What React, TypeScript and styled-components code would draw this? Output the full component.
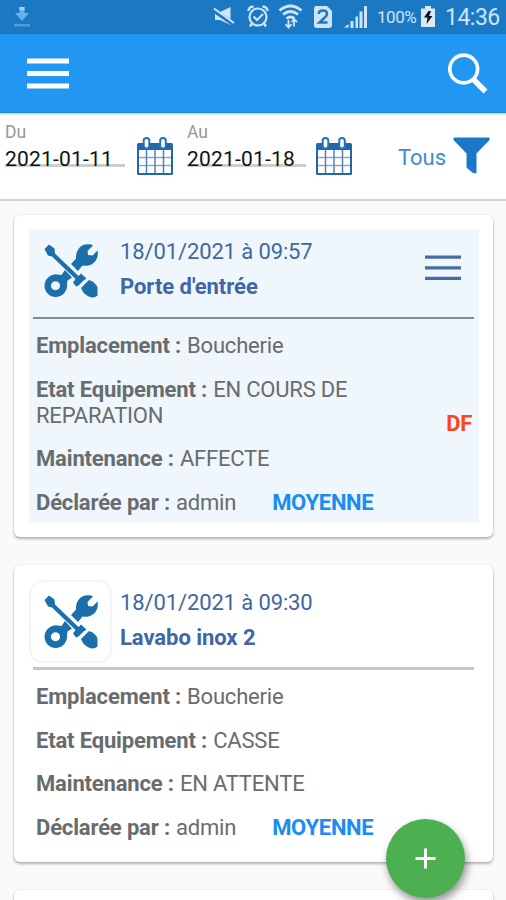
import React from "react";
import styled, { createGlobalStyle } from "styled-components";

const GlobalStyle = createGlobalStyle`
  * { box-sizing: border-box; }
  body {
    margin: 0;
    background: #fafafa;
    font-family: Roboto, "Liberation Sans", sans-serif;
  }
  svg { display: block; flex: none; }
`;

const Screen = styled.div`
  position: relative;
  width: 506px;
  height: 900px;
  overflow: hidden;
  background: #fafafa;
`;

const StatusBar = styled.div`
  display: flex;
  align-items: center;
  height: 34px;
  padding: 0 6px 0 13px;
  background: #1b79c4;
  color: #cfe4f8;
`;

const StatusIcons = styled.div`
  display: flex;
  align-items: center;
  margin-left: auto;
`;

const BatteryLevel = styled.span`
  width: 53px;
  padding-left: 9px;
  font-size: 17px;
  line-height: 34px;
  letter-spacing: -0.45px;
  white-space: nowrap;
`;

const Clock = styled.span`
  width: 55px;
  margin-left: 10px;
  font-size: 23px;
  line-height: 35px;
  letter-spacing: -0.5px;
  white-space: nowrap;
`;

const AppBar = styled.header`
  display: flex;
  align-items: center;
  justify-content: space-between;
  height: 79px;
  padding: 0 18px 0 27px;
  background: #2196f3;
  border-bottom: 1px solid #1c8ae0;
`;

const IconButton = styled.button`
  display: block;
  padding: 0;
  border: 0;
  background: none;
  color: inherit;
`;

const FilterBar = styled.section`
  display: flex;
  align-items: flex-start;
  height: 88px;
  padding: 9px 16px 0 5px;
  background: linear-gradient(#d4d4d4, #fff 3px);
  border-bottom: 2px solid #d2d2d2;
`;

const DateField = styled.label<{ $width: number }>`
  display: flex;
  flex-direction: column;
  width: ${(p) => p.$width}px;
`;

const FieldLabel = styled.span`
  height: 21px;
  font-size: 17.5px;
  line-height: 20px;
  color: #979797;
`;

const DateValue = styled.span`
  height: 24px;
  border-bottom: 3px solid #cdcdcd;
  font-size: 21px;
  line-height: 32px;
  letter-spacing: 0.2px;
  color: #111;
  white-space: nowrap;
`;

const CalendarSlot = styled.div<{ $left: number; $right: number }>`
  padding-top: 15px;
  margin: 0 ${(p) => p.$right}px 0 ${(p) => p.$left}px;
`;

const StatusFilter = styled.div`
  display: flex;
  align-items: center;
  margin: 14px 0 0 auto;
  height: 39px;
  gap: 7px;
  font-size: 22px;
  color: #3b8ed0;
`;

const FilterText = styled.span`
  line-height: 42px;
  padding-top: 4px;
`;

const CardList = styled.main`
  display: flex;
  flex-direction: column;
  gap: 28px;
  padding: 14px 13px 0 14px;
`;

const Card = styled.article<{ $height: number }>`
  flex: none;
  height: ${(p) => p.$height}px;
  padding: 14px;
  background: #fff;
  border-radius: 6px;
  box-shadow: 0 2px 3px rgba(0, 0, 0, 0.28), 0 0 2px rgba(0, 0, 0, 0.12);
`;

const CardContent = styled.div<{ $highlighted?: boolean }>`
  position: relative;
  width: 450px;
  height: 100%;
  margin-left: 1px;
  padding-top: ${(p) => (p.$highlighted ? 0 : 1)}px;
  background: ${(p) => (p.$highlighted ? "#eff7fd" : "#fff")};
`;

const CardHeader = styled.div<{ $highlighted?: boolean }>`
  display: flex;
  height: 90px;
  margin: 0 5px 0 4px;
  border-bottom: ${(p) => (p.$highlighted ? "2px solid #858b8f" : "3px solid #c6c6c6")};
`;

const Tile = styled.div<{ $framed?: boolean }>`
  display: flex;
  align-items: center;
  justify-content: center;
  flex: none;
  width: 83px;
  height: 83px;
  margin: 0 0 0 -4px;
  border: 2px solid ${(p) => (p.$framed ? "#f5f5f5" : "transparent")};
  border-radius: 14px;
`;

const Titles = styled.div`
  display: flex;
  flex-direction: column;
  gap: 9px;
  padding: 10px 0 0 8px;
  color: #4166a6;
  font-size: 22px;
  line-height: 26px;
  white-space: nowrap;
`;

const DateLine = styled.span`
  letter-spacing: -0.12px;
`;

const Name = styled.strong`
  font-weight: 700;
  letter-spacing: -0.05px;
`;

const CardMenu = styled(IconButton)`
  margin: 26px 13px 0 auto;
  height: 26px;
`;

const Details = styled.dl`
  display: flex;
  flex-direction: column;
  gap: 17.6px;
  margin: 0;
  padding: 14px 0 0 7px;
  color: #686c6e;
  font-size: 22px;
  line-height: 26px;
`;

const Detail = styled.div`
  width: 340px;
  white-space: nowrap;
`;

const Term = styled.dt`
  display: inline;
  margin-right: 6px;
  font-weight: 700;
  letter-spacing: -0.16px;
`;

const Value = styled.dd`
  display: inline;
  margin: 0;
  letter-spacing: -0.2px;
  white-space: normal;
`;

const Priority = styled.strong`
  margin-left: 36px;
  font-weight: 700;
  letter-spacing: -0.3px;
  color: #1b8cf0;
`;

const Flag = styled.strong`
  position: absolute;
  top: 182px;
  right: 7px;
  font-size: 22px;
  line-height: 26px;
  font-weight: 700;
  letter-spacing: -0.3px;
  color: #f8481f;
`;

const AddButton = styled.button`
  position: absolute;
  right: 41px;
  bottom: 2px;
  display: flex;
  align-items: center;
  justify-content: center;
  width: 79px;
  height: 79px;
  padding: 0;
  border: 0;
  border-radius: 50%;
  background: #4caf50;
  box-shadow: 2px 5px 9px rgba(0, 0, 0, 0.42);
`;

const DownloadIcon = () => (
  <svg width="18" height="20" viewBox="0 0 18 20">
    <path d="M6.5 0h5v6H16L9 14 2 6h4.500z" fill="#6aaee6" />
    <path d="M6.500 0h5v3h-5z" fill="#a9d0f2" />
    <path d="M1 17h16v2.500H1z" fill="#4d9bdc" />
  </svg>
);

const StatusGlyphs = () => (
  <svg width="155" height="34" viewBox="213 0 155 34" fill="none" stroke="#cfe4f8">
    <path d="M215 12h5l10.500-5v18l-10.500-5h-5z" fill="#cfe4f8" stroke="none" />
    <path d="M213.500 10l20 14" stroke="#1b79c4" strokeWidth="4.500" />
    <path d="M214 8.500l20 14.500" stroke="#cfe4f8" strokeWidth="2" />

    <circle cx="258" cy="17" r="8.500" strokeWidth="2.200" />
    <path d="M253.500 16.500l3.500 3.500 6-6" strokeWidth="2" />
    <path d="M248.500 11q0-4 5-4.500M267.500 11q0-4-5-4.500M252 23.500l-2 3M264 23.500l2 3" strokeWidth="2.400" />

    <path d="M279.500 10.500q11-9 22 0M283 14.500q7.500-6 15 0M286.500 18.500q4-3 8 0" strokeWidth="2.800" />
    <path d="M288.500 27v-7m-3 4l3 3.500 3-3.500M294 19.500v7m-2.500-4.500l2.500-3 3 3" strokeWidth="1.800" />

    <path d="M316 6h11l5 5v14q0 3-3 3h-12q-3 0-3-3V9q0-3 2-3z" fill="#cfe4f8" stroke="none" />
    <path d="M318.800 14q0-3.500 4.200-3.500 4 0 4 3.300 0 2-2.500 4l-5 4.700h8" stroke="#1b79c4" strokeWidth="2.500" />

    <path d="M344 27.500h4.500V24zM350.500 28v-7h3v7zM355.500 28v-11.500h2.500V28zM359.500 28V11.500h3V28zM364 28V6h3v22z" fill="#cfe4f8" stroke="none" />
  </svg>
);

const BatteryIcon = () => (
  <svg width="14" height="22" viewBox="0 0 14 22">
    <path d="M4 0h6v2.500h4V21H0V2.500h4z" fill="#d9e9f8" />
    <path d="M7.500 5L3 11.500h3.500L5.500 18l6-8H8l2-5z" fill="#0c1116" />
  </svg>
);

const MenuIcon = () => (
  <svg width="42" height="32" viewBox="0 0 42 32" stroke="#fff" strokeWidth="5">
    <path d="M0 4h42M0 16.500h42M0 29h42" />
  </svg>
);

const SearchIcon = () => (
  <svg width="40" height="42" viewBox="448 52 40 42" fill="none" stroke="#fff">
    <circle cx="463.700" cy="69" r="13.900" strokeWidth="3.600" />
    <path d="M473 79l12.500 12.500" strokeWidth="5.500" />
  </svg>
);

const CalendarIcon = () => (
  <svg width="36" height="39" viewBox="0 0 36 39">
    <rect x="0" y="6" width="36" height="32" rx="1.500" fill="#2068a9" />
    <rect x="2" y="13" width="32" height="23" fill="#fff" />
    <path d="M2 20.500h32M2 28.500h32" stroke="#8ba6cc" strokeWidth="1.500" />
    <path d="M9.500 13v23M18 13v23M26.500 13v23" stroke="#5580b4" strokeWidth="1.500" />
    <rect x="6.700" y="1" width="5.600" height="10.500" rx="2.700" fill="#fff" stroke="#2374b8" strokeWidth="2" />
    <rect x="23.200" y="1" width="5.600" height="10.500" rx="2.700" fill="#fff" stroke="#2374b8" strokeWidth="2" />
  </svg>
);

const FunnelIcon = () => (
  <svg width="37" height="38" viewBox="0 0 37 38">
    <path d="M1 1h35v2L23 16.500v19.500L20 35.500l-6-5V16.500L1 3z" fill="#1b78c8" stroke="#1b78c8" strokeLinejoin="round" />
  </svg>
);

const ToolsIcon = () => (
  <svg width="54" height="54" viewBox="0 0 54 54" fill="#1b70ab">
    <path d="M.5 5L5 .5l5.500 4L11 9.500 34.500 32l2.500-2.500 5.500 5-3 2-5 5-2.500 1-3-4 2.500-3.500L8 12.500l-4-1z" />
    <path d="M37 44l8-8q6.500 2 8.500 7.500v8Q51 54 47.500 53.500 40 52 37 44z" />
    <path d="M27 20l5-5.500C31.500 6 37 0 44 .3 46 .3 48 .8 49 1.500L43.500 7l.5 4 4.500.5 5-5C55 14 51 20 44.500 21.500q-3 .7-6 0L34 27z" />
    <path fillRule="evenodd" d="M13.500 30.500l4 .5 3.500-5 7 7.500-4.500 3-.5 3.500A11.300 11.300 0 1 1 13.500 30.500zM11.500 37.200a4.500 4.500 0 1 0 .01 0z" />
  </svg>
);

const CardMenuIcon = () => (
  <svg width="36" height="26" viewBox="0 0 36 26" stroke="#456ca5" strokeWidth="3.300">
    <path d="M0 2.200h36M0 12.800h36M0 23.300h36" />
  </svg>
);

const PlusIcon = () => (
  <svg width="21" height="21" viewBox="0 0 21 21" stroke="#fff" strokeWidth="3">
    <path d="M.5 10.500h20M10.500.5v20" />
  </svg>
);

type Ticket = {
  date: string;
  name: string;
  place: string;
  state: string;
  maintenance: string;
  author: string;
  priority: string;
  flag?: string;
  highlighted?: boolean;
  height: number;
};

const tickets: Ticket[] = [
  {
    date: "18/01/2021 à 09:57",
    name: "Porte d'entrée",
    place: "Boucherie",
    state: "EN COURS DE REPARATION",
    maintenance: "AFFECTE",
    author: "admin",
    priority: "MOYENNE",
    flag: "DF",
    highlighted: true,
    height: 322,
  },
  {
    date: "18/01/2021 à 09:30",
    name: "Lavabo inox 2",
    place: "Boucherie",
    state: "CASSE",
    maintenance: "EN ATTENTE",
    author: "admin",
    priority: "MOYENNE",
    height: 297,
  },
];

const TicketCard = ({ ticket }: { ticket: Ticket }) => (
  <Card $height={ticket.height}>
    <CardContent $highlighted={ticket.highlighted}>
      <CardHeader $highlighted={ticket.highlighted}>
        <Tile $framed={!ticket.highlighted}>
          <ToolsIcon />
        </Tile>
        <Titles>
          <DateLine>{ticket.date}</DateLine>
          <Name>{ticket.name}</Name>
        </Titles>
        {ticket.highlighted && (
          <CardMenu aria-label="Actions">
            <CardMenuIcon />
          </CardMenu>
        )}
      </CardHeader>
      <Details>
        <Detail>
          <Term>Emplacement :</Term>
          <Value>{ticket.place}</Value>
        </Detail>
        <Detail>
          <Term>Etat Equipement :</Term>
          <Value>{ticket.state}</Value>
        </Detail>
        <Detail>
          <Term>Maintenance :</Term>
          <Value>{ticket.maintenance}</Value>
        </Detail>
        <Detail>
          <Term>Déclarée par :</Term>
          <Value>{ticket.author}</Value>
          <Priority>{ticket.priority}</Priority>
        </Detail>
      </Details>
      {ticket.flag && <Flag>{ticket.flag}</Flag>}
    </CardContent>
  </Card>
);

export default function App() {
  return (
    <>
      <GlobalStyle />
      <Screen>
        <StatusBar>
          <DownloadIcon />
          <StatusIcons>
            <StatusGlyphs />
            <BatteryLevel>100%</BatteryLevel>
            <BatteryIcon />
            <Clock>14:36</Clock>
          </StatusIcons>
        </StatusBar>
        <AppBar>
          <IconButton aria-label="Menu">
            <MenuIcon />
          </IconButton>
          <IconButton aria-label="Rechercher">
            <SearchIcon />
          </IconButton>
        </AppBar>
        <FilterBar>
          <DateField $width={120}>
            <FieldLabel>Du</FieldLabel>
            <DateValue>2021-01-11</DateValue>
          </DateField>
          <CalendarSlot $left={12} $right={14}>
            <CalendarIcon />
          </CalendarSlot>
          <DateField $width={119}>
            <FieldLabel>Au</FieldLabel>
            <DateValue>2021-01-18</DateValue>
          </DateField>
          <CalendarSlot $left={10} $right={0}>
            <CalendarIcon />
          </CalendarSlot>
          <StatusFilter>
            <FilterText>Tous</FilterText>
            <FunnelIcon />
          </StatusFilter>
        </FilterBar>
        <CardList>
          {tickets.map((ticket) => (
            <TicketCard key={ticket.date} ticket={ticket} />
          ))}
          <Card $height={40} />
        </CardList>
        <AddButton aria-label="Ajouter">
          <PlusIcon />
        </AddButton>
      </Screen>
    </>
  );
}
